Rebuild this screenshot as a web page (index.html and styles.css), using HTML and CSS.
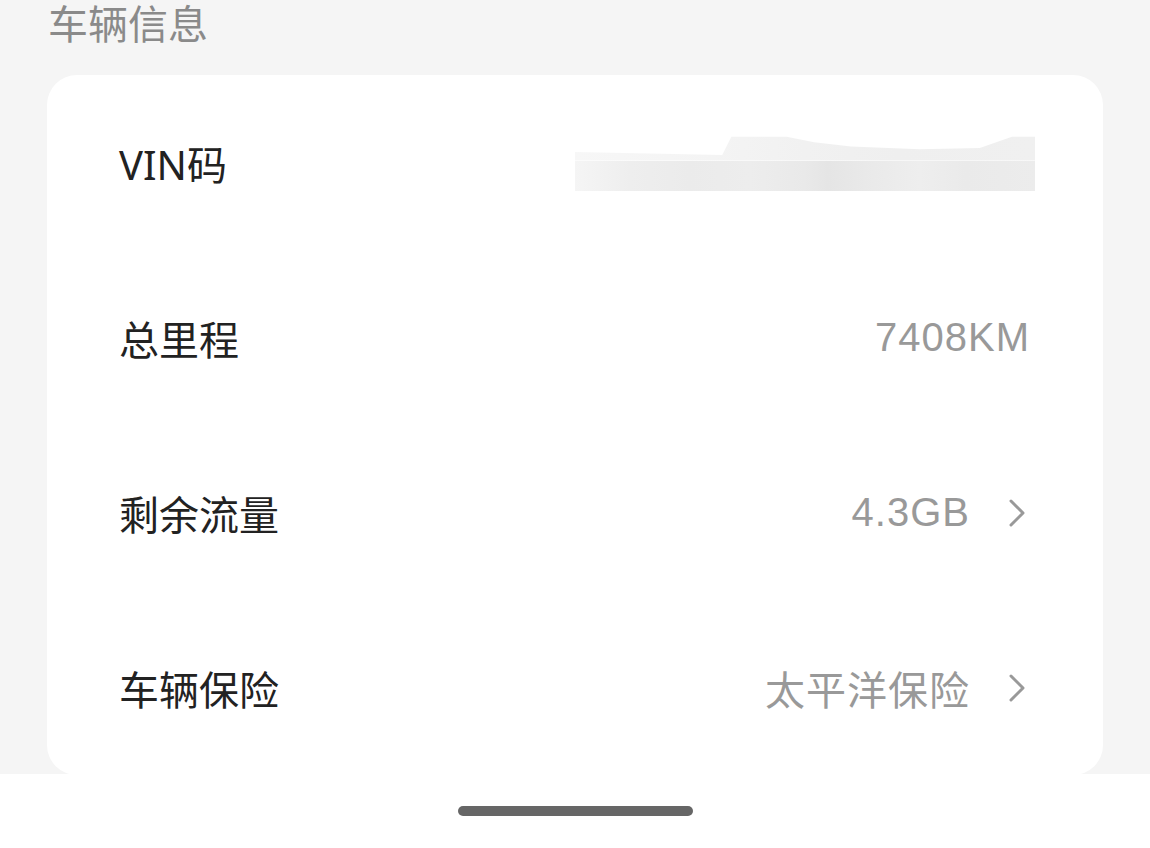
FILE: index.html
```html
<!DOCTYPE html>
<html lang="zh-CN">
<head>
	<meta charset="UTF-8">
	<title>车辆信息</title>
	<link rel="stylesheet" href="styles.css">
</head>
<body>
	<div class="page">
		<div class="section-title">车辆信息</div>
		<div class="card">
			<div class="row">
				<span class="label">VIN码</span>
				<div class="vin-mask">
					<div class="vin-top"></div>
					<div class="vin-bottom"></div>
				</div>
			</div>
			<div class="row">
				<span class="label">总里程</span>
				<span class="value">7408KM</span>
			</div>
			<div class="row">
				<span class="label">剩余流量</span>
				<span class="value">4.3GB</span>
				<svg class="arrow" viewBox="0 0 20 30" width="20" height="30"><path d="M4 3 L16 15 L4 27" fill="none" stroke="#999" stroke-width="3" stroke-linecap="round" stroke-linejoin="round"/></svg>
			</div>
			<div class="row">
				<span class="label">车辆保险</span>
				<span class="value">太平洋保险</span>
				<svg class="arrow" viewBox="0 0 20 30" width="20" height="30"><path d="M4 3 L16 15 L4 27" fill="none" stroke="#999" stroke-width="3" stroke-linecap="round" stroke-linejoin="round"/></svg>
			</div>
		</div>
	</div>
	<div class="home-bar">
		<div class="indicator"></div>
	</div>
</body>
</html>
```

FILE: styles.css
```css
body{margin:0;background-color:#fff;font-family:"Noto Sans","Noto Sans CJK SC",sans-serif;}
.page{height:774px;overflow:hidden;background-color:#f5f5f5;padding:0 47px;}
.section-title{height:48px;line-height:48px;font-size:40px;color:#8a8a8a;padding-left:1px;}
.card{margin-top:27px;height:700px;background-color:#fff;border-radius:30px;padding:0 73px 0 72px;}
.row{display:flex;align-items:center;height:175px;}
.label{flex:1;font-size:40px;color:#222;}
.value{font-family:"Liberation Sans","Noto Sans CJK SC",sans-serif;font-size:40px;letter-spacing:1px;color:#999;}
.arrow{margin-left:37px;margin-right:3px;}
.vin-mask{width:460px;height:60px;display:flex;flex-direction:column;margin-right:-5px;}
.vin-top{height:28px;background:linear-gradient(90deg,#f7f7f7 0,#f4f4f4 30%,#f1f1f1 50%,#efefef 70%,#f0f0f0 100%);
	clip-path:polygon(0 70%,32% 80%,34% 15%,46% 15%,52% 35%,60% 50%,75% 60%,88% 55%,95% 15%,100% 15%,100% 100%,0 100%);}
.vin-bottom{height:30px;background:linear-gradient(90deg,#f5f5f5 0,#eeeeee 12%,#ebebeb 25%,#ededed 38%,#e9e9e9 50%,#e5e5e5 55%,#eaeaea 65%,#eeeeee 75%,#eaeaea 85%,#ececec 100%);}
.home-bar{height:74px;display:flex;justify-content:center;align-items:center;}
.indicator{width:235px;height:10px;border-radius:5px;background-color:#666;}
```
